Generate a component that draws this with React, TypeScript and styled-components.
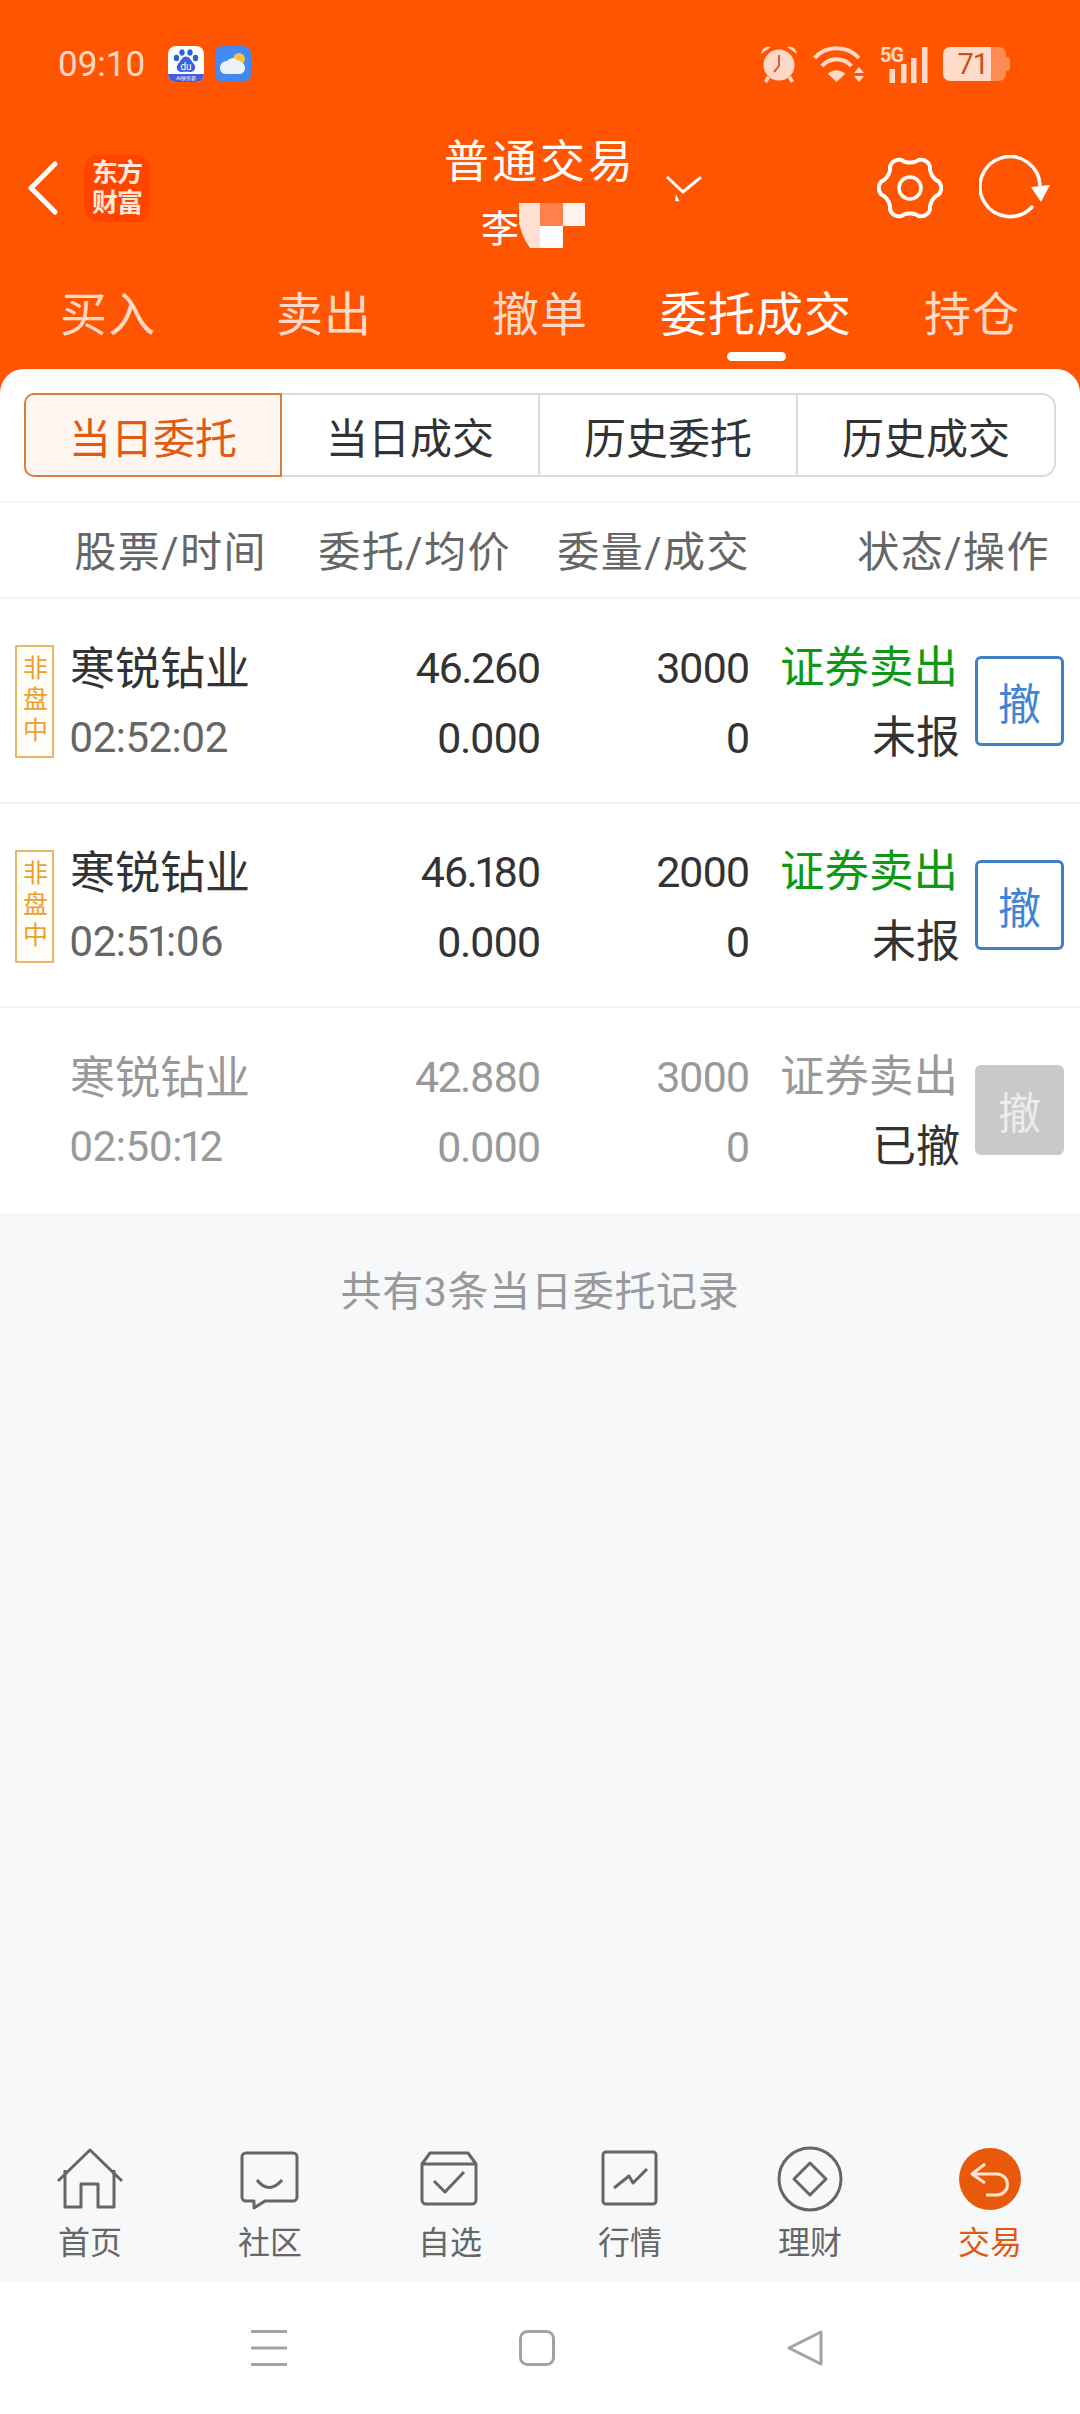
import * as React from 'react';
import styled, { createGlobalStyle } from 'styled-components';

const ORANGE = '#ff5500';
const PALE = '#ffd9c7';
const FONT = 'Roboto, "Noto Sans CJK SC", sans-serif';

const orders = [
  { id: 1, tag: true, name: '寒锐钻业', time: '02:52:02', price: '46.260', avg: '0.000', qty: '3000', deal: '0', state: '未报', live: true },
  { id: 2, tag: true, name: '寒锐钻业', time: '02:51:06', price: '46.180', avg: '0.000', qty: '2000', deal: '0', state: '未报', live: true },
  { id: 3, tag: false, name: '寒锐钻业', time: '02:50:12', price: '42.880', avg: '0.000', qty: '3000', deal: '0', state: '已撤', live: false },
];

// six flat-topped teeth, sampled round the circle
const gearPath = () => {
  const pts: string[] = [];
  for (let i = 0; i < 240; i++) {
    const t = (i / 240) * Math.PI * 2;
    const c = Math.cos(6 * t);
    const r = 28.3 + 2.9 * Math.sign(c) * Math.pow(Math.abs(c), 0.7);
    pts.push(`${(33 + r * Math.cos(t)).toFixed(2)} ${(33 + r * Math.sin(t)).toFixed(2)}`);
  }
  return `M${pts.join('L')}Z`;
};

const App = () => (
  <>
    <GlobalStyle />
    <Page>
      <Top>
        <StatusBar>
          <Time>09:10</Time>
          <BaiduIcon />
          <WeatherIcon />
          <StatusRight>
            <AlarmIcon />
            <WifiIcon />
            <SignalIcon />
            <Battery>71</Battery>
          </StatusRight>
        </StatusBar>
        <NavRow>
          <NavLeft>
            <svg width="31" height="54" viewBox="0 0 31 54" fill="none">
              <path d="M28 3 L4 27 L28 51" stroke="#fff" strokeWidth="5" strokeLinecap="round" strokeLinejoin="round" />
            </svg>
            <Logo>
              东方
              <br />
              财富
            </Logo>
          </NavLeft>
          <TitleBlock>
            <Title>普通交易</Title>
            <SubTitle>
              李
              <svg width="66" height="45" viewBox="0 0 66 45">
                <path d="M0 0 H21 V45 H11 Q3 34 0 20 Z" fill="#ffe0d3" />
                <rect x="21" width="23" height="23" fill="#ff7f4d" />
                <rect x="44" width="22" height="23" fill="#fff3ee" />
                <rect x="21" y="23" width="23" height="22" fill="#fff" />
              </svg>
            </SubTitle>
          </TitleBlock>
          <NavRight>
            <ChevronWrap>
              <svg width="36" height="26" viewBox="0 0 36 26" fill="none">
                <path d="M1 1 L17 16 L35 1" stroke="#fff" strokeWidth="3" />
                <polygon points="10,18 9,25 13.5,25.5" fill="#fff" />
              </svg>
            </ChevronWrap>
            <NavActions>
              <svg width="66" height="66" viewBox="0 0 66 66" fill="none">
                <path d={gearPath()} stroke="#fff" strokeWidth="4" />
                <circle cx="33" cy="33" r="11" stroke="#fff" strokeWidth="3.5" />
              </svg>
              <svg width="71" height="66" viewBox="0 0 71 66" fill="none">
                <path d="M61 31 A30 30 0 1 0 53 52" stroke="#fff" strokeWidth="3.5" strokeLinecap="round" />
                <polygon points="52,32 71,30 62,47" fill="#fff" />
              </svg>
            </NavActions>
          </NavRight>
        </NavRow>
        <Tabs>
          <Tab>买入</Tab>
          <Tab>卖出</Tab>
          <Tab>撤单</Tab>
          <Tab $active>委托成交</Tab>
          <Tab>持仓</Tab>
        </Tabs>
        <SegmentPanel>
          <Segments>
            <Segment $active>当日委托</Segment>
            <Segment>当日成交</Segment>
            <Segment>历史委托</Segment>
            <Segment>历史成交</Segment>
          </Segments>
        </SegmentPanel>
      </Top>

      <TableHead>
        <HeadCell>股票/时间</HeadCell>
        <HeadCell>委托/均价</HeadCell>
        <HeadCell>委量/成交</HeadCell>
        <HeadCell>状态/操作</HeadCell>
      </TableHead>

      <div>
        {orders.map(o => (
          <Row key={o.id} $last={!o.live}>
            <TagSlot>{o.tag && <Tag>非盘中</Tag>}</TagSlot>
            <LeftCell>
              <Name $muted={!o.live}>{o.name}</Name>
              <Clock $muted={!o.live}>{o.time}</Clock>
            </LeftCell>
            <RightCell>
              <Num $muted={!o.live} $first>{o.price}</Num>
              <Num $muted={!o.live}>{o.avg}</Num>
            </RightCell>
            <RightCell>
              <Num $muted={!o.live} $first>{o.qty}</Num>
              <Num $muted={!o.live}>{o.deal}</Num>
            </RightCell>
            <RightCell>
              <Direction $muted={!o.live}>证券卖出</Direction>
              <State>{o.state}</State>
            </RightCell>
            <CancelButton $disabled={!o.live}>撤</CancelButton>
          </Row>
        ))}
      </div>

      <Content>
        <Summary>共有3条当日委托记录</Summary>
      </Content>

      <BottomNav>
        <NavItem>
          <NavIcon>
            <path d="M3 38 L35 7 L67 38" />
            <path d="M10 27 V64 H26 V41 H43 V64 H59 V27" />
          </NavIcon>
          <NavLabel>首页</NavLabel>
        </NavItem>
        <NavItem>
          <NavIcon>
            <path d="M11 10 H58 a4 4 0 0 1 4 4 V54 a4 4 0 0 1 -4 4 H30 L19 65 V58 H11 a4 4 0 0 1 -4 -4 V14 a4 4 0 0 1 4 -4 Z" />
            <path d="M22 37 Q34 52 47 37" />
          </NavIcon>
          <NavLabel>社区</NavLabel>
        </NavItem>
        <NavItem>
          <NavIcon>
            <path d="M7 21 V57 a4 4 0 0 0 4 4 H57 a4 4 0 0 0 4 -4 V21 L53 10 H15 L7 21 H61" />
            <path d="M19 38 L30 49 L49 29" />
          </NavIcon>
          <NavLabel>自选</NavLabel>
        </NavItem>
        <NavItem>
          <NavIcon>
            <rect x="8" y="9" width="53" height="52" rx="3" />
            <path d="M19 45 L34 33 L38 40 L52 26" />
          </NavIcon>
          <NavLabel>行情</NavLabel>
        </NavItem>
        <NavItem>
          <NavIcon>
            <circle cx="35" cy="36" r="31" />
            <path d="M35 20 L51 36 L35 52 L19 36 Z" />
          </NavIcon>
          <NavLabel>理财</NavLabel>
        </NavItem>
        <NavItem>
          <NavIcon $color="#ffe3d0">
            <circle cx="35" cy="36" r="31" fill="#e8590c" stroke="none" />
            <path d="M30 21 L17 31 L30 40 M17 31 H42 a10.5 10.5 0 0 1 0 21 H31" />
          </NavIcon>
          <NavLabel $active>交易</NavLabel>
        </NavItem>
      </BottomNav>

      <SystemNav>
        <svg width="36" height="36" viewBox="0 0 36 36" fill="#a3a3a3">
          <rect width="36" height="3" y="0" />
          <rect width="36" height="3" y="16.5" />
          <rect width="36" height="3" y="33" />
        </svg>
        <svg width="36" height="36" viewBox="0 0 36 36" fill="none">
          <rect x="1.5" y="1.5" width="33" height="33" rx="7" stroke="#a3a3a3" strokeWidth="3" />
        </svg>
        <svg width="36" height="36" viewBox="0 0 36 36" fill="none">
          <path d="M2 18 L34 2 V34 Z" stroke="#a3a3a3" strokeWidth="3" strokeLinejoin="round" />
        </svg>
      </SystemNav>
    </Page>
  </>
);

const BaiduIcon = () => (
  <StatusApp width="36" height="36" viewBox="0 0 36 36">
    <defs>
      <clipPath id="baidu-clip">
        <rect width="36" height="36" rx="8" />
      </clipPath>
    </defs>
    <g clipPath="url(#baidu-clip)">
      <rect width="36" height="36" fill="#fff" />
      <rect y="28" width="36" height="8" fill="#3f5fdc" />
      <ellipse cx="8.5" cy="12" rx="2.7" ry="3.3" fill="#2c62d8" />
      <ellipse cx="14" cy="6.5" rx="2.6" ry="3.3" fill="#2c62d8" />
      <ellipse cx="22" cy="6.5" rx="2.6" ry="3.3" fill="#2c62d8" />
      <ellipse cx="27.5" cy="12" rx="2.7" ry="3.3" fill="#2c62d8" />
      <path d="M18 10.5 C22 10.5 23 15 26 18 C29 22 26 26.5 22 26 C20 25.6 16 25.6 14 26 C10 26.5 7 22 10 18 C13 15 14 10.5 18 10.5 Z" fill="#3f5fdc" />
      <text x="18" y="24" textAnchor="middle" fontSize="10" fontFamily="Roboto, sans-serif" fill="#fff">du</text>
      <text x="18" y="34" textAnchor="middle" fontSize="5" fontFamily="Roboto, sans-serif" fill="#fff">·AI搜答题·</text>
    </g>
  </StatusApp>
);

const WeatherIcon = () => (
  <StatusApp width="36" height="36" viewBox="0 0 36 36">
    <rect width="36" height="36" rx="8" fill="#4289f2" />
    <circle cx="24" cy="13" r="6" fill="#f3c544" />
    <path d="M11 28 C7 28 5 25 5 22 C5 18 8 15 12 15 C14 12 19 11 22 14 C25 15 30 17 30 22 C30 26 27 28 24 28 Z" fill="#eef2f8" />
  </StatusApp>
);

const AlarmIcon = () => (
  <svg width="38" height="38" viewBox="0 0 38 38">
    <g fill={PALE}>
      <circle cx="19" cy="20" r="15.5" />
      <path d="M1 9 C2 3 7 0 11 2 Z" />
      <path d="M37 9 C36 3 31 0 27 2 Z" />
      <path d="M7 31 L10 33 L7 38 L4 36 Z" />
      <path d="M31 31 L28 33 L31 38 L34 36 Z" />
    </g>
    <path d="M19 10 V21 L14 27" fill="none" stroke="#d9622a" strokeWidth="2" />
  </svg>
);

const WifiIcon = () => (
  <svg width="52" height="37" viewBox="0 0 52 37" fill="none">
    <g stroke={PALE} strokeWidth="4">
      <path d="M1.5 12 C13 -1 34 -1 46 12" />
      <path d="M9 20 C17 11 30 11 38.5 20" />
    </g>
    <path d="M15 28 L23.5 36 L32 28 C27 23 20 23 15 28 Z" fill={PALE} />
    <polygon points="46,21 51,27 41,27" fill={PALE} />
    <polygon points="41,30 51,30 46,36" fill={PALE} />
  </svg>
);

const SignalIcon = () => (
  <SignalWrap>
    <FiveG>5G</FiveG>
    <svg width="48" height="37" viewBox="0 0 48 37" fill={PALE}>
      <rect x="9.5" y="23" width="5.5" height="14" />
      <rect x="21" y="18" width="5.5" height="19" />
      <rect x="31" y="12" width="5.5" height="25" />
      <rect x="42" y="1" width="5.5" height="36" />
    </svg>
  </SignalWrap>
);

const GlobalStyle = createGlobalStyle`
  html, body {
    margin: 0;
    padding: 0;
    width: 1080px;
    height: 2414px;
    overflow: hidden;
    background: #fff;
  }
  body {
    font-family: ${FONT};
  }
  * {
    box-sizing: border-box;
  }
`;

const Page = styled.div`
  width: 1080px;
  height: 2414px;
  display: flex;
  flex-direction: column;
  background: #f7f8fa;
`;

const Top = styled.div`
  background: ${ORANGE};
`;

const StatusBar = styled.div`
  height: 128px;
  padding: 0 70px 0 58px;
  display: flex;
  align-items: center;
`;

const Time = styled.span`
  font-size: 35px;
  color: ${PALE};
  margin-right: 23px;
`;

const StatusApp = styled.svg`
  margin-right: 11px;
`;

const StatusRight = styled.div`
  margin-left: auto;
  display: flex;
  align-items: center;
  gap: 15px;
`;

const SignalWrap = styled.div`
  position: relative;
  width: 48px;
  height: 37px;
`;

const FiveG = styled.span`
  position: absolute;
  left: 0;
  top: 0;
  font-size: 20px;
  font-weight: 700;
  line-height: 18px;
  letter-spacing: -1px;
  color: ${PALE};
`;

const Battery = styled.div`
  position: relative;
  width: 63px;
  height: 34px;
  margin-right: 4px;
  padding-right: 18px;
  border-radius: 7px;
  background: linear-gradient(90deg, #ffdccb 76%, #ff8c55 76%);
  color: #c9501a;
  font-size: 29px;
  line-height: 34px;
  text-align: right;
  letter-spacing: -1px;

  &::after {
    content: '';
    position: absolute;
    right: -4px;
    top: 10px;
    width: 4px;
    height: 14px;
    border-radius: 0 3px 3px 0;
    background: #ff8c55;
  }
`;

const NavRow = styled.div`
  height: 120px;
  display: grid;
  grid-template-columns: 1fr auto 1fr;
`;

const NavLeft = styled.div`
  padding-left: 27px;
  display: flex;
  align-items: center;
  gap: 26px;
  height: 120px;
`;

const Logo = styled.div`
  width: 66px;
  height: 67px;
  border-radius: 14px;
  background: #ff4400;
  color: #ffe9dd;
  font-size: 26px;
  font-weight: 700;
  line-height: 30px;
  letter-spacing: -1px;
  text-align: center;
  padding-top: 3px;
`;

const TitleBlock = styled.div`
  padding-top: 12px;
`;

const Title = styled.div`
  font-size: 45px;
  line-height: 46px;
  letter-spacing: 3px;
  color: #fff;
`;

const SubTitle = styled.div`
  margin-top: 17px;
  padding-left: 37px;
  height: 45px;
  display: flex;
  align-items: center;
  font-size: 38px;
  color: #fff;
`;

const NavRight = styled.div`
  display: flex;
  align-items: center;
  height: 120px;
  padding-right: 30px;
`;

const ChevronWrap = styled.div`
  margin-left: 30px;
  height: 26px;
  margin-top: 2px;
`;

const NavActions = styled.div`
  margin-left: auto;
  display: flex;
  align-items: center;
  gap: 36px;
`;

const Tabs = styled.div`
  height: 121px;
  display: grid;
  grid-template-columns: repeat(5, 1fr);
`;

const Tab = styled.div<{ $active?: boolean }>`
  position: relative;
  padding-top: 39px;
  text-align: center;
  font-size: 47px;
  line-height: 56px;
  letter-spacing: 1px;
  color: ${p => (p.$active ? '#fff' : PALE)};

  ${p =>
    p.$active &&
    `&::after {
      content: '';
      position: absolute;
      left: 79px;
      bottom: 8px;
      width: 59px;
      height: 9px;
      border-radius: 5px;
      background: #fff;
    }`}
`;

const SegmentPanel = styled.div`
  background: #fff;
  border-radius: 24px 24px 0 0;
  padding: 24px 24px 24px;
  border-bottom: 2px solid #f4f4f4;
`;

const Segments = styled.div`
  display: grid;
  grid-template-columns: repeat(4, 258px);
  height: 84px;
`;

const Segment = styled.div<{ $active?: boolean }>`
  display: flex;
  align-items: center;
  justify-content: center;
  font-size: 42px;
  color: ${p => (p.$active ? '#e05a14' : '#333')};
  background: ${p => (p.$active ? '#fff6f2' : '#fff')};
  border: ${p => (p.$active ? '2px solid #dc7d40' : '2px solid #dcdcdc')};
  border-left-width: ${p => (p.$active ? '2px' : '0')};

  &:first-child {
    border-radius: 10px 0 0 10px;
  }
  &:last-child {
    border-radius: 0 14px 14px 0;
  }
`;

const TableHead = styled.div`
  height: 96px;
  padding-bottom: 4px;
  display: grid;
  grid-template-columns: 267px 244px 239px 300px;
  align-items: center;
  background: #fff;
  border-bottom: 2px solid #f2f2f2;
`;

const HeadCell = styled.div`
  text-align: right;
  font-size: 42px;
  letter-spacing: 1.5px;
  color: #666;
`;

const Row = styled.div<{ $last?: boolean }>`
  height: 204.6px;
  padding: 3px 16px 0 15px;
  display: grid;
  grid-template-columns: 55px 230px 240px 209px 209px 106px;
  align-items: center;
  background: #fff;
  border-bottom: 2px solid ${p => (p.$last ? '#fff' : '#f2f2f2')};
`;

const TagSlot = styled.div`
  width: 39px;
`;

const Tag = styled.div`
  width: 39px;
  height: 113px;
  padding-right: 4px;
  border: 2px solid #e8b868;
  color: #ef9f2c;
  font-size: 25px;
  letter-spacing: 6px;
  writing-mode: vertical-rl;
  text-orientation: upright;
  display: flex;
  align-items: center;
  justify-content: center;
  background: #fffdf8;
`;

const LeftCell = styled.div`
  display: flex;
  flex-direction: column;
`;

const RightCell = styled.div`
  display: flex;
  flex-direction: column;
  align-items: flex-end;
`;

const Name = styled.div<{ $muted?: boolean }>`
  height: 71px;
  padding-top: 3px;
  line-height: 71px;
  font-size: 45px;
  color: ${p => (p.$muted ? '#999' : '#333')};
`;

const Clock = styled.div<{ $muted?: boolean }>`
  height: 71px;
  margin-left: -1px;
  line-height: 71px;
  font-size: 42px;
  letter-spacing: -0.6px;
  font-variant-numeric: proportional-nums;
  color: ${p => (p.$muted ? '#999' : '#666')};
`;

const Num = styled.div<{ $muted?: boolean; $first?: boolean }>`
  height: 71px;
  padding-top: ${p => (p.$first ? '2px' : '1px')};
  line-height: 71px;
  font-size: 43px;
  letter-spacing: -1.6px;
  font-variant-numeric: proportional-nums;
  color: ${p => (p.$muted ? '#999' : '#333')};
`;

const Direction = styled.div<{ $muted?: boolean }>`
  height: 71px;
  padding-top: 2px;
  line-height: 71px;
  font-size: 44.5px;
  color: ${p => (p.$muted ? '#999' : '#0c9a14')};
`;

const State = styled.div`
  height: 71px;
  margin-right: -2px;
  padding-top: 1px;
  line-height: 71px;
  font-size: 44px;
  color: #333;
`;

const CancelButton = styled.div<{ $disabled?: boolean }>`
  width: 89px;
  height: 90px;
  margin-left: 17px;
  margin-top: -2px;
  border-radius: 6px;
  border: 3px solid ${p => (p.$disabled ? '#c9c9c9' : '#3f7fc4')};
  background: ${p => (p.$disabled ? '#c9c9c9' : '#fff')};
  color: ${p => (p.$disabled ? '#ececec' : '#3f85d6')};
  display: flex;
  align-items: center;
  justify-content: center;
  font-size: 43px;
`;

const Content = styled.div`
  flex: 1;
  padding-top: 54px;
`;

const Summary = styled.div`
  text-align: center;
  font-size: 41px;
  line-height: 50px;
  letter-spacing: 0.7px;
  color: #999;
`;

const BottomNav = styled.div`
  height: 147px;
  padding-top: 8px;
  display: grid;
  grid-template-columns: repeat(6, 180px);
`;

const NavItem = styled.div`
  display: flex;
  flex-direction: column;
  align-items: center;
`;

const NavIconSvg = styled.svg<{ $color?: string }>`
  width: 70px;
  height: 70px;
  fill: none;
  stroke: ${p => p.$color || '#666'};
  stroke-width: 3;
  stroke-linejoin: round;
`;

const NavIcon = ({ children, $color }: { children: React.ReactNode; $color?: string }) => (
  <NavIconSvg viewBox="0 0 70 70" $color={$color}>
    {children}
  </NavIconSvg>
);

const NavLabel = styled.div<{ $active?: boolean }>`
  margin-top: 12px;
  font-size: 32px;
  line-height: 36px;
  color: ${p => (p.$active ? '#e05a14' : '#666')};
`;

const SystemNav = styled.div`
  height: 132px;
  background: #fff;
  padding: 48px 0 0 251px;
  display: flex;
  align-items: flex-start;
  gap: 232px;
`;

export default App;
